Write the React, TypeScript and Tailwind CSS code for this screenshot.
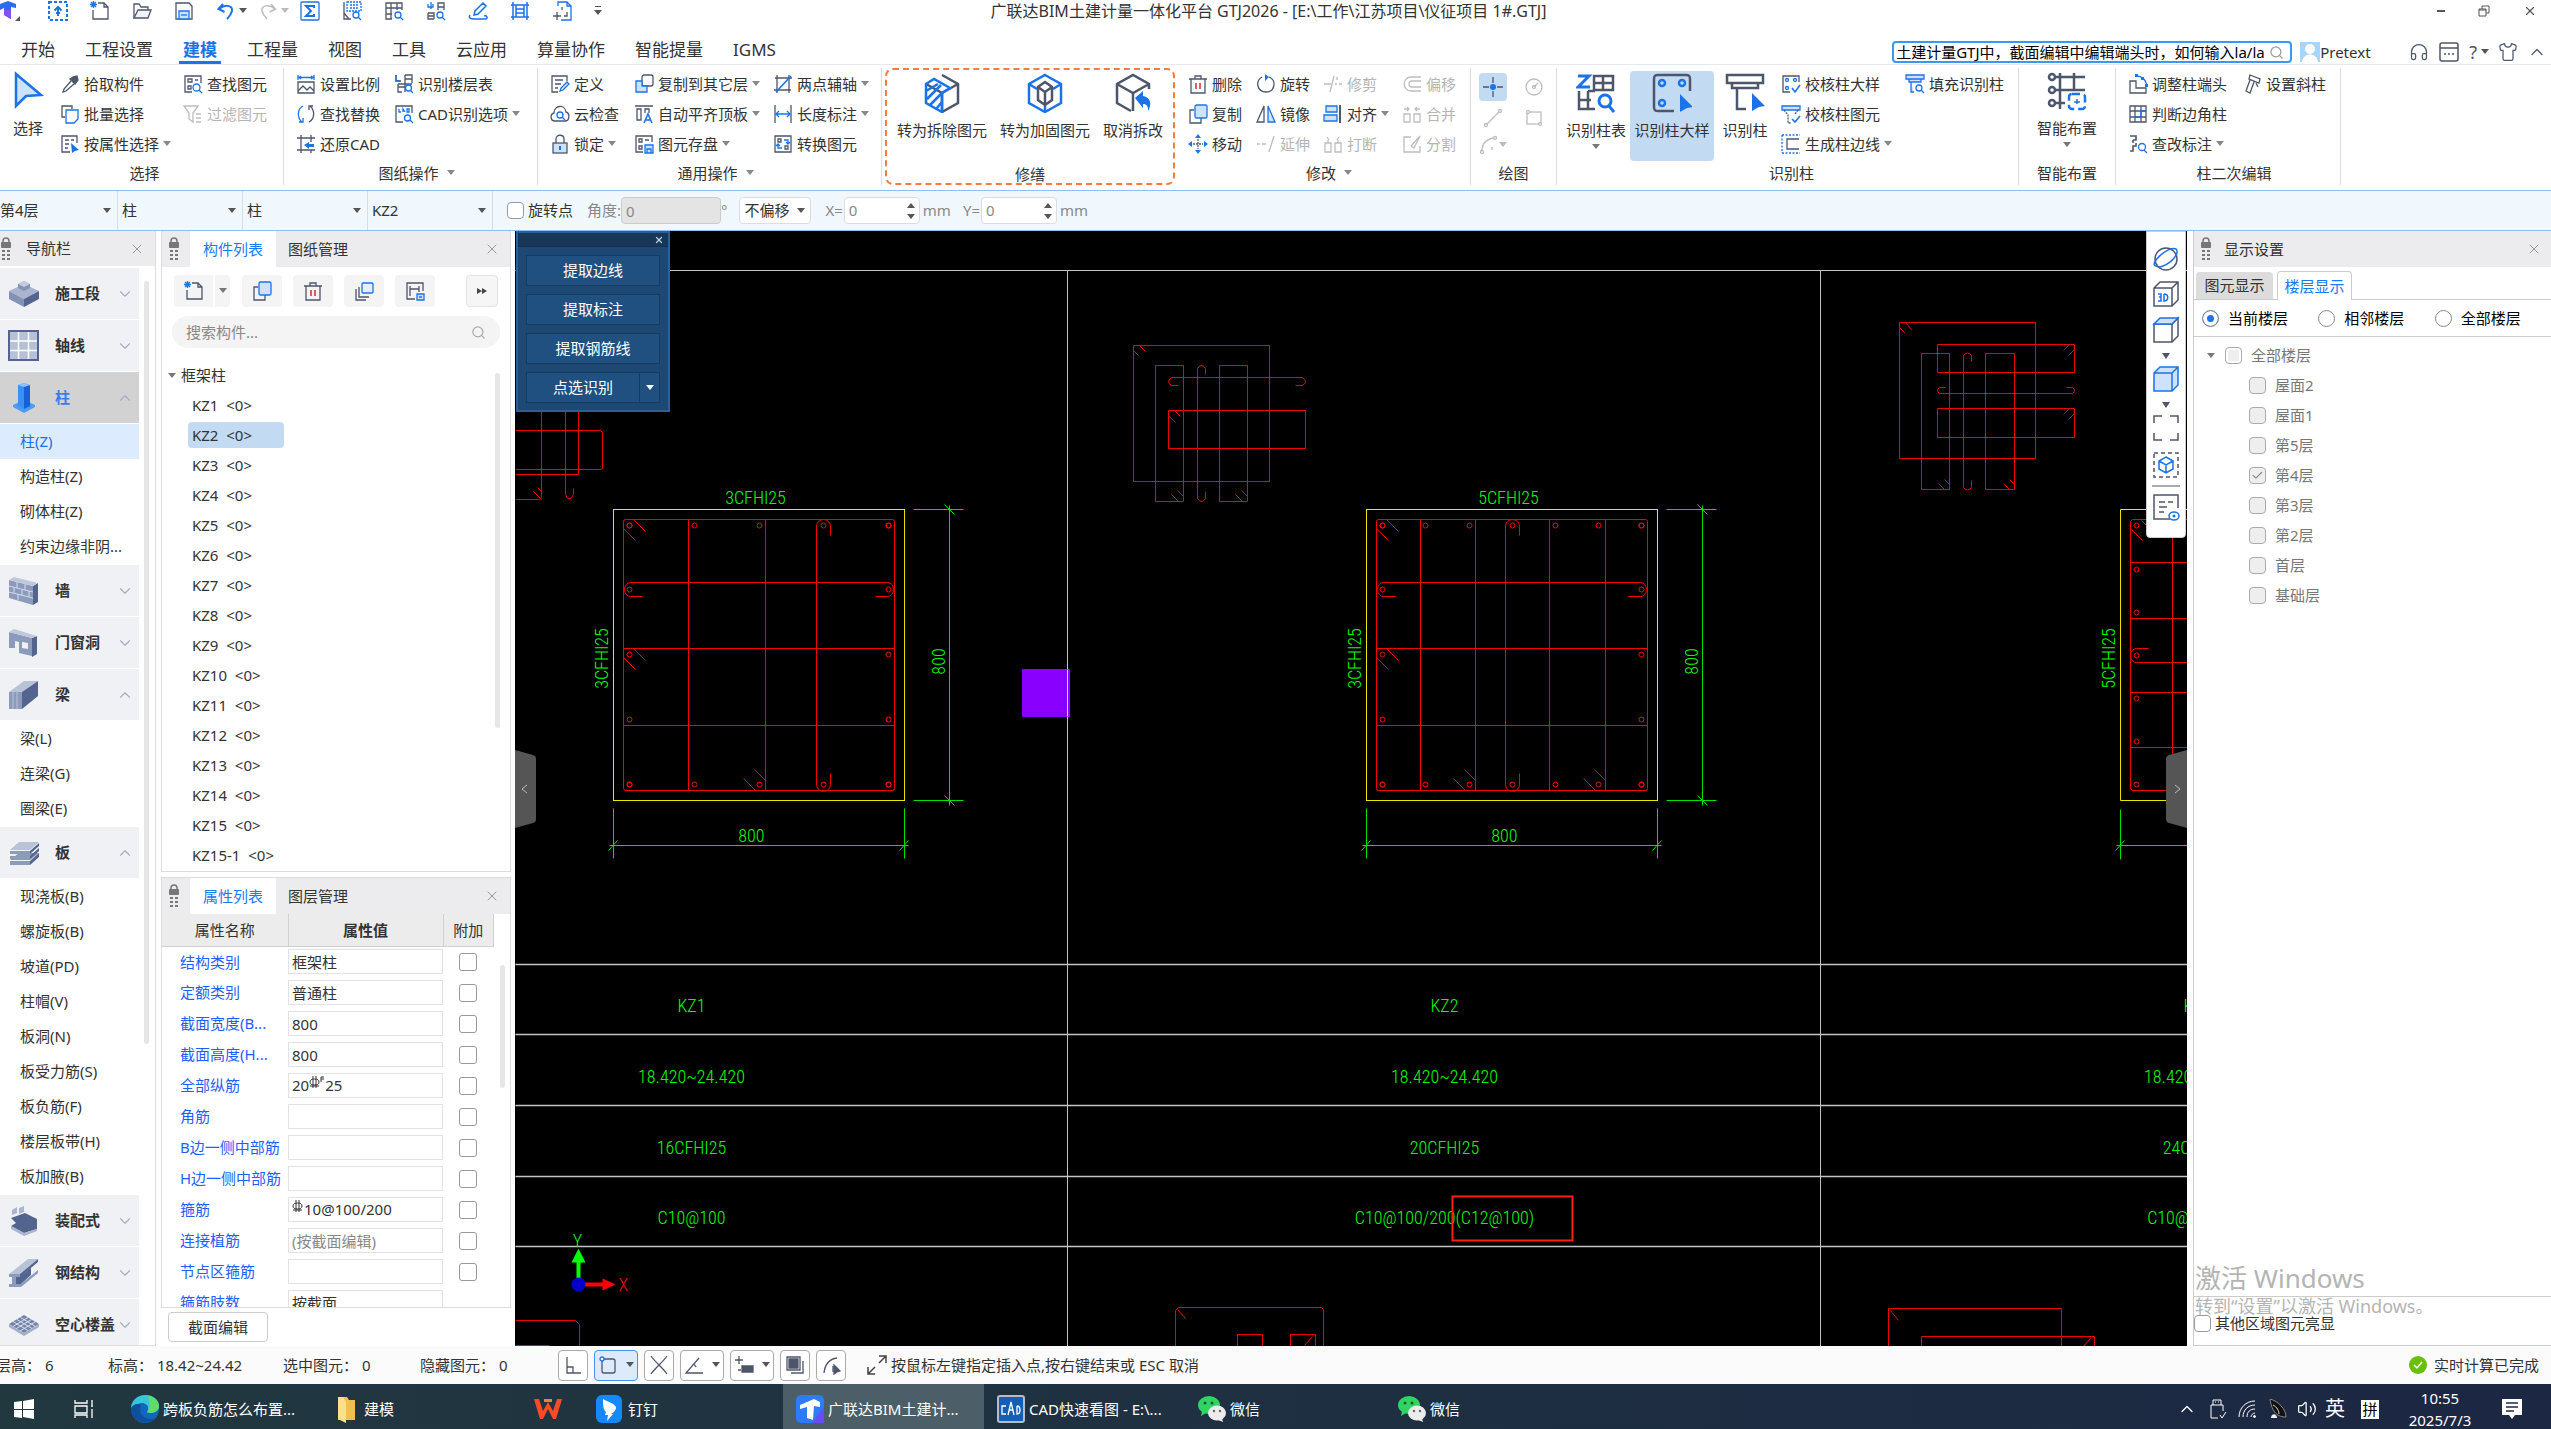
import type { ReactNode } from "react";

import { Check, ChevronDown, ChevronUp, Headphones, Search, Shirt, Volume2, X } from "lucide-react";

const G = "#4d566b";
const B = "#1a73e8";
const L = "#cfe2fb";
const D = "#bdbdbd";

interface GlyphProps {
    name: string;
    className?: string;
}

// 20 x 20 line drawings shared by the toolbars
const glyphs: Record<string, ReactNode> = {
    pickBox: (
        <>
            <rect x="1" y="1" width="18" height="18" stroke={B} strokeWidth="2" strokeDasharray="3 2" />
            <path d="M10 15V6M6.5 9.5 10 6l3.5 3.5M8 12h4" stroke={B} strokeWidth="2" />
        </>
    ),
    newFile: (
        <>
            <path d="M8 2h6l4 4v12H3V9M14 2v4h4" stroke={G} />
            <path d="M1 1l5 5M6 1 1 6M3.5 0v7M0 3.5h7" stroke={B} />
        </>
    ),
    open: (
        <>
            <path d="M2 17V3h5l2 3h7v3" stroke={G} />
            <path d="M2 17 6 9h13l-3 8z" stroke={G} fill="#f1f3f7" />
        </>
    ),
    save: (
        <>
            <path d="M2 18V2h13l3 3v13z" stroke={G} />
            <path d="M5 18v-8h10v8z" stroke={B} fill={L} />
            <path d="M7 14h6" stroke={B} />
        </>
    ),
    undo: <path d="M7 3 2.5 8l6 3M3 8c6-5 14-4 13 2-1 4-3 6-5 8" stroke={B} strokeWidth="2" />,
    redo: <path d="m13 3 4.500 5-6 3M17 8C11 3 3 4 4 10c1 4 3 6 5 8" stroke={D} strokeWidth="1.500" />,
    sigma: (
        <>
            <rect x="1" y="1" width="18" height="18" rx="1" stroke={B} />
            <path d="M14 7V5H6l5 5-5 5h8v-2" stroke={B} strokeWidth="2" />
        </>
    ),
    levelFind: (
        <>
            <path d="M2 1v17h7M2 12l5 6" stroke={G} />
            <path d="M5 1h14v9H5zM8 4h9M8 7h9" stroke={B} strokeDasharray="2 1" />
            <circle cx="14" cy="14" r="3" stroke={B} />
            <path d="m16 16 3 3" stroke={B} />
        </>
    ),
    gridFind: (
        <>
            <path d="M18 9V2H2v16h6M2 7h16M2 13h6M7 2v16M13 2v7" stroke={G} />
            <circle cx="14" cy="14" r="3" stroke={B} />
            <path d="m16 16 3 3" stroke={B} />
        </>
    ),
    blocksFind: (
        <>
            <path d="M12 9V2h6v7M12 6h6M2 12h6v6M2 12v6h6M2 15h6" stroke={G} />
            <path d="M5 1v7M2 3v3h5V3" stroke={B} />
            <circle cx="14" cy="14" r="3" stroke={B} />
            <path d="m16 16 3 3" stroke={B} />
        </>
    ),
    brush: <path d="m15 2 3 3-8 8-4 1 1-4zM2 14c-2 3 1 4 4 4h12c2-1 1-4-2-3" stroke={B} strokeWidth="1.500" />,
    ladder: <path d="M3 1v18M17 1v18M1 4h18M1 16h18M6 4v12M14 4v12M6 8h8M6 12h8" stroke={B} strokeWidth="1.500" />,
    addPage: (
        <>
            <path d="M6 5V1h9l4 4v14H9M15 1v4h4" stroke={B} />
            <path d="M10 6v3M5 11v8M1 15h8M15 11v4h-3" stroke={G} />
        </>
    ),
    cursor: <path d="M3 1v17l5-5 8-1z" stroke={B} strokeWidth="1.600" fill={L} />,
    dropper: (
        <>
            <path d="m13 3 4-1 1 4-3 4-5-5z" fill={G} stroke={G} />
            <path d="m11 7-7 8-1 3 3-1 8-7" stroke={G} />
        </>
    ),
    multi: (
        <>
            <path d="M5 13H2V2h10v3" stroke={G} />
            <path d="M6 6h12v9l-4 4H6z" stroke={B} fill="#fff" />
        </>
    ),
    listCursor: (
        <>
            <path d="M17 9V2H2v16h8" stroke={G} />
            <path d="M5 6h4M11 6h3M5 10h4M5 14h3" stroke={G} />
            <path d="m11 9 8 7-4 1-3 2z" fill={B} />
        </>
    ),
    findList: (
        <>
            <path d="M18 9V2H2v16h7" stroke={G} />
            <path d="M5 5h4v3H5zM5 12h3v3H5zM12 6h3" stroke={G} />
            <circle cx="13.500" cy="13.500" r="3.500" stroke={B} />
            <path d="m16 16 3 3" stroke={B} />
        </>
    ),
    filter: <path d="M1 2h14l-5 7v9l-4-3V9zM13 10h5M13 14h5M13 18h5" stroke={D} />,
    scale: (
        <>
            <path d="M2 1v5M18 1v5M2 3.500h16M5 2 3 3.500 5 5M15 2l2 1.500L15 5" stroke={B} />
            <path d="M2 8h16v11H2zM2 17l5-5 4 4 3-3 4 4" stroke={G} />
        </>
    ),
    floorTable: (
        <>
            <path d="M2 1v6h5M11 1h7v8M11 1v17M11 5h7M4 10v8h4M4 13h7M4 10h14" stroke={G} />
            <circle cx="14.500" cy="14" r="3" stroke={B} />
            <path d="m16.500 16.500 2.500 2.500M2 1v6h4" stroke={B} />
        </>
    ),
    swap: (
        <>
            <path d="M7 2C1 5 1 14 6 18M3 18h4v-4" stroke={B} />
            <path d="M13 18c6-3 6-12 1-16M17 2h-4v4" stroke={G} />
        </>
    ),
    cadFind: (
        <>
            <path d="M18 9V2H2v16h7" stroke={G} />
            <path d="M5 5v3h2M9 8V5l2 3M13 5v3h2V5z" stroke={B} />
            <circle cx="13.500" cy="14" r="3" stroke={B} />
            <path d="m16 16 3 3" stroke={B} />
        </>
    ),
    restore: (
        <>
            <path d="M5 1v18M15 1v7M1 4h18M1 16h18M15 16v3" stroke={G} />
            <path d="m8 11 5-3v2h5v3h-5v2z" fill={B} />
        </>
    ),
    define: (
        <>
            <path d="M17 7V2H2v16h6M5 6h8M5 10h6M5 14h3" stroke={G} />
            <path d="m10 17 1-3 6-6 2 2-6 6z" stroke={B} fill={L} />
        </>
    ),
    cloud: (
        <>
            <path d="M5 17c-5 0-5-7-1-8 0-8 11-9 12-1 4 1 4 9-1 9z" stroke={G} />
            <circle cx="10" cy="11" r="3" stroke={B} />
            <path d="m12 13 3 3" stroke={B} />
        </>
    ),
    lock: (
        <>
            <path d="M6 9V5c0-5 8-5 8 0v4" stroke={G} />
            <rect x="3" y="9" width="14" height="10" stroke={G} fill={L} />
            <path d="M10 12v4" stroke={B} strokeWidth="2" />
        </>
    ),
    copyTo: (
        <>
            <rect x="8" y="1" width="11" height="11" rx="2" stroke={G} />
            <path d="M8 7H2v11h11v-6H8z" stroke={B} fill={L} />
        </>
    ),
    alignTop: (
        <>
            <path d="M1 2h18M3 5h4v11H3zM11 9V5h4v4" stroke={G} />
            <path d="m10 19 4-9 4 9M11.500 16h5" stroke={B} strokeWidth="1.600" />
        </>
    ),
    storeList: (
        <>
            <path d="M18 8V2H2v16h7M5 5h3v3H5zM5 12h3v3H5zM11 6h4" stroke={G} />
            <path d="M11 11h8v8h-8zM13 19v-4h4v4" stroke={B} fill={L} />
        </>
    ),
    axis2: (
        <>
            <path d="M2 4h17M4 1v18M16 1v18M1 16h17" stroke={G} />
            <path d="M3 18 18 2" stroke={B} strokeWidth="1.600" />
        </>
    ),
    lengthDim: (
        <>
            <path d="M2 1v18M18 1v18" stroke={G} />
            <path d="M3 10h14M6 7l-3 3 3 3M14 7l3 3-3 3" stroke={B} />
        </>
    ),
    convert: (
        <>
            <path d="M2 2h16v16H2z" stroke={G} />
            <path d="M5 5h3v3H5zM12 12h3v3h-3z" stroke={G} />
            <path d="M11 6h4v3M9 14H5v-3M13 8l2 2 2-2M3 12l2-2 2 2" stroke={B} />
        </>
    ),
    remove: (
        <>
            <path d="M1 5h18M7 5V2h6v3M3 5v14h14V5" stroke={G} />
            <path d="M8 9v6M12 9v6" stroke="#d9363e" strokeWidth="1.600" />
        </>
    ),
    copy: (
        <>
            <path d="M6 6H2v13h11v-5" stroke={G} />
            <rect x="7" y="1" width="12" height="13" rx="1.500" stroke={B} fill={L} />
        </>
    ),
    move: (
        <>
            <path d="M10 5v10M5 10h10" stroke={G} strokeDasharray="2 1" />
            <path d="m10 0 3 4H7zM10 20l3-4H7zM0 10l4-3v6zM20 10l-4-3v6z" fill={B} />
        </>
    ),
    rotate: (
        <>
            <path d="M13 3c8 3 6 15-3 15S-1 7 6 3" stroke={G} />
            <path d="m9 0 4 3-4 4z" fill={B} />
        </>
    ),
    mirror: (
        <>
            <path d="M8 2v16H1z" stroke={G} />
            <path d="M12 2v16h7z" stroke={B} fill={L} />
        </>
    ),
    extend: <path d="M1 10h3M6 10h4M18 2l-5 16" stroke={D} />,
    trim: <path d="M1 10h7M11 2 7 18M12 10h2M16 10h3M14 3v3" stroke={D} />,
    align: (
        <>
            <path d="M17 1v18" stroke={G} strokeWidth="2" />
            <path d="M3 2h11v6H3zM1 11h13v6H1z" stroke={B} fill={L} />
        </>
    ),
    breakUp: <path d="M2 9h6v9H2zM12 9h6v9h-6zM4 3l2 3M16 3l-2 3M5 9V6M15 9V6" stroke={D} />,
    offset: <path d="M19 3H9C0 3 0 17 9 17h10M19 7h-9c-4 0-4 6 0 6h9" stroke={D} />,
    merge: <path d="M2 10h6v8H2zM12 10h6v8h-6zM2 5h5M5 3l2 2-2 2M18 5h-5M15 3l-2 2 2 2" stroke={D} />,
    split: <path d="M9 3H2v15h16v-6M9 12 18 2M9 12l3 2 6-12" stroke={D} />,
    point: (
        <>
            <path d="M10 0v6M10 14v6M0 10h6M14 10h6" stroke={G} />
            <circle cx="10" cy="10" r="3" fill={B} />
        </>
    ),
    circle: (
        <>
            <circle cx="10" cy="10" r="8" stroke={D} />
            <path d="m10 10 4-4" stroke={D} />
            <circle cx="10" cy="10" r="1.500" stroke={D} />
        </>
    ),
    line: (
        <>
            <path d="M4 16 16 4" stroke={D} />
            <circle cx="3" cy="17" r="1.500" stroke={D} />
            <circle cx="17" cy="3" r="1.500" stroke={D} />
        </>
    ),
    rect: (
        <>
            <rect x="3" y="4" width="14" height="12" stroke={D} />
            <circle cx="4" cy="4" r="1.500" stroke={D} fill="#fff" />
            <circle cx="16" cy="16" r="1.500" stroke={D} fill="#fff" />
        </>
    ),
    arc: (
        <>
            <path d="M3 16C3 8 8 4 15 3M13 12v3" stroke={D} />
            <circle cx="3" cy="17" r="1.500" stroke={D} />
            <circle cx="16" cy="3" r="1.500" stroke={D} />
        </>
    ),
    checkSection: (
        <>
            <path d="M18 8V2H2v16h7" stroke={G} />
            <circle cx="6" cy="6" r="1.500" stroke={B} />
            <circle cx="14" cy="6" r="1.500" stroke={B} />
            <circle cx="6" cy="14" r="1.500" stroke={B} />
            <path d="m11 14 3 4 5-7" stroke={B} strokeWidth="1.600" />
        </>
    ),
    checkElement: (
        <>
            <path d="M1 2h18v4H1z" stroke={B} fill={L} />
            <path d="m3 6 4 5v8h3M17 6l-3 4" stroke={G} strokeDasharray="2 1" />
            <path d="m11 15 3 3 5-6" stroke={B} strokeWidth="1.600" />
        </>
    ),
    edgeLines: (
        <>
            <path d="M1 1h18M1 1v18M1 19h18" stroke={B} strokeDasharray="2 1.500" />
            <path d="M18 5H6v10h12" stroke={G} />
        </>
    ),
    fillFind: (
        <>
            <path d="M1 1h18v4H1zM4 5v3h12V5M6 8v10h3" stroke={B} fill={L} />
            <circle cx="14" cy="14" r="3" stroke={B} fill="#fff" />
            <path d="m16 16 3 3" stroke={B} />
        </>
    ),
    adjustEnd: (
        <>
            <path d="M2 7v12h16v-5H8V7z" stroke={G} />
            <path d="M8 2c6 0 10 4 11 10" stroke={B} />
            <path d="M7 0h3v3H7zM13 3h3v3h-3zM17 10h3v3h-3z" fill={B} />
        </>
    ),
    cornerGrid: (
        <>
            <path d="M2 2h16v16H2zM2 7h16M2 13h16M7 2v16M13 2v16" stroke={G} />
            <path d="M7 13h6V7h5" stroke={B} />
        </>
    ),
    editMark: (
        <>
            <path d="M2 2h6v4H5M5 6v3M8 9v3H5v5H2" stroke={G} strokeWidth="1.600" />
            <circle cx="14" cy="13" r="3.500" stroke={B} />
            <path d="m16 16 3 3" stroke={B} />
        </>
    ),
    slanted: <path d="m8 1 10 4-1 4-10-4zM8 6 4 17l4 2 4-11M14 9l2 4" stroke={G} />,
    batch: (
        <>
            <path d="M2 8v11h10M5 6v10h10" stroke={G} />
            <rect x="8" y="2" width="11" height="10" rx="1" stroke={B} fill="#e4effd" />
        </>
    ),
    storeRow: (
        <>
            <path d="M18 10V2H2v16h8M5 5v10M5 8h9M14 5v6" stroke={G} />
            <path d="M12 13h7v6h-7zM14 16h3" stroke={B} fill={L} />
        </>
    ),
};

function Glyph({ name, className = "size-5" }: GlyphProps) {
    return (
        <svg viewBox="0 0 20 20" fill="none" strokeWidth="1.300" className={`shrink-0 ${className}`}>
            {glyphs[name]}
        </svg>
    );
}

function Caret({ className = "text-[#777]" }: { className?: string }) {
    return (
        <svg viewBox="0 0 8 6" className={`h-[6px] w-2 shrink-0 fill-current ${className}`}>
            <path d="M0 0h8L4 5z" />
        </svg>
    );
}

interface Tool {
    icon: string;
    label: string;
    caret?: boolean;
    disabled?: boolean;
}

function ToolColumn({ tools, className = "" }: { tools: Tool[]; className?: string }) {
    return (
        <div className={`flex shrink-0 flex-col ${className}`}>
            {tools.map((tool) => (
                <button
                    key={tool.label}
                    disabled={tool.disabled}
                    className={`flex h-[30px] items-center gap-1 whitespace-nowrap ${tool.disabled ? "text-[#b5b5b5]" : "text-[#333]"}`}
                >
                    <Glyph name={tool.icon} />
                    {tool.label}
                    {tool.caret && <Caret className="text-[#888]" />}
                </button>
            ))}
        </div>
    );
}

function BigTool({ label, caret, className = "", children }: { label: string; caret?: boolean; className?: string; children: ReactNode }) {
    return (
        <button className={`flex h-[90px] shrink-0 flex-col items-center rounded pt-[2px] whitespace-nowrap ${className}`}>
            <svg viewBox="0 0 40 40" fill="none" stroke={G} strokeWidth="2.500" className="size-10">
                {children}
            </svg>
            <span className="mt-[7px] leading-5">{label}</span>
            {caret && <Caret className="mt-1 text-[#777]" />}
        </button>
    );
}

function RibbonGroup({ label, caret, className = "", children }: { label: string; caret?: boolean; className?: string; children: ReactNode }) {
    return (
        <section className={`flex h-[117px] shrink-0 flex-col ${className}`}>
            <div className="flex h-[91px] pt-px">{children}</div>
            <div className="flex flex-1 items-center justify-center gap-2 pt-[2px]">
                {label}
                {caret && <Caret className="text-[#888]" />}
            </div>
        </section>
    );
}

const quickTools = ["pickBox", "newFile", "open", "save", "undo", "redo", "sigma", "levelFind", "gridFind", "blocksFind", "brush", "ladder", "addPage"];

function TitleBar() {
    return (
        <header className="flex h-[22px] items-center">
            <div className="flex flex-1 items-center">
                <svg viewBox="0 0 20 20" className="mr-7 size-5">
                    <path d="M0 3 8 0l8 3v4l-5-1v12l-7-4V7L0 9z" fill="#2b6cf0" />
                    <path d="M4 9h7v9l-7-4z" fill="#8a4df0" />
                    <path d="M20 15v5h-5z" fill="#555" />
                </svg>
                {quickTools.map((name) => (
                    <button key={name} aria-label={name} className="flex w-[42px] items-center gap-[3px]">
                        <Glyph name={name} />
                        {name === "undo" && <Caret className="text-[#555]" />}
                        {name === "redo" && <Caret className="text-[#bbb]" />}
                    </button>
                ))}
                <svg viewBox="0 0 8 10" className="h-[10px] w-2" fill="#555">
                    <path d="M1 0h6v1H1zM0 4h8L4 9z" />
                </svg>
            </div>
            <h1 className="text-base">广联达BIM土建计量一体化平台 GTJ2026 - [E:\工作\江苏项目\仪征项目 1#.GTJ]</h1>
            <div className="flex flex-1 items-center justify-end gap-[33px] pr-[14px] text-[#555]">
                <button aria-label="最小化" className="h-[2px] w-2 bg-[#555]" />
                <button aria-label="还原">
                    <svg viewBox="0 0 12 12" fill="none" stroke="currentColor" className="size-3">
                        <path d="M4 4V1h7v7H8M1 4h7v7H1zM1 5h7" />
                    </svg>
                </button>
                <button aria-label="关闭">
                    <X className="size-[14px]" />
                </button>
            </div>
        </header>
    );
}

const menus = ["开始", "工程设置", "建模", "工程量", "视图", "工具", "云应用", "算量协作", "智能提量", "IGMS"];

function MenuBar() {
    return (
        <nav className="flex h-[43px] justify-between border-b border-[#e6e8ec]">
            <div className="flex pl-[6px]">
                {menus.map((menu) => (
                    <button
                        key={menu}
                        className={`mx-[11px] border-b-[3px] px-1 pt-[16px] text-[17px] leading-[23px] ${
                            menu === "建模" ? "border-[#1a73e8] font-bold text-[#1a73e8]" : "border-transparent"
                        }`}
                    >
                        {menu}
                    </button>
                ))}
            </div>
            <div className="flex items-center gap-2 pt-[18px] pr-1 text-[15px]">
                <label className="flex h-[22px] w-[400px] items-center rounded-sm border-2 border-[#3b97f5] px-[2px]">
                    <input
                        aria-label="搜索"
                        defaultValue="土建计量GTJ中，截面编辑中编辑端头时，如何输入la/lae"
                        className="min-w-0 flex-1 text-black outline-none"
                    />
                    <Search className="mx-1 size-[15px] text-[#999]" />
                </label>
                <div className="flex w-[101px] items-center">
                    <svg viewBox="0 0 20 20" className="size-5">
                        <path d="M0 0h20v20H0z" fill="#a9d4fb" />
                        <circle cx="10" cy="7" r="5" fill="#fff" />
                        <path d="M2 20c1-10 15-10 16 0z" fill="#fff" />
                    </svg>
                    Pretext
                </div>
                <Headphones className="size-5 text-[#4d566b]" strokeWidth={1.5} />
                <svg viewBox="0 0 20 20" fill="none" stroke={G} strokeWidth="1.500" className="mx-[2px] size-5">
                    <rect x="1" y="1" width="18" height="18" rx="2" />
                    <path d="M1 6h18M5 12h2M9 12h2M13 12h2" />
                </svg>
                <span className="flex items-center gap-1 text-[18px] text-[#4d566b]">
                    ?<Caret className="text-[#555]" />
                </span>
                <Shirt className="mx-px size-5 text-[#4d566b]" strokeWidth={1.5} />
                <ChevronUp className="size-5 text-[#4d566b]" strokeWidth={1.5} />
            </div>
        </nav>
    );
}

function Ribbon() {
    return (
        <div className="flex h-[125px] items-start pt-[3px]">
            <RibbonGroup label="选择" className="w-[284px] border-r border-[#dcdcdc] pl-[6px]">
                <BigTool label="选择" className="w-[54px] pr-[10px]">
                    <path d="M8 3v32l10-10 15-1z" stroke={B} fill={L} />
                </BigTool>
                <ToolColumn
                    className="w-[123px]"
                    tools={[
                        { icon: "dropper", label: "拾取构件" },
                        { icon: "multi", label: "批量选择" },
                        { icon: "listCursor", label: "按属性选择", caret: true },
                    ]}
                />
                <ToolColumn
                    tools={[
                        { icon: "findList", label: "查找图元" },
                        { icon: "filter", label: "过滤图元", disabled: true },
                    ]}
                />
            </RibbonGroup>
            <RibbonGroup label="图纸操作" caret className="w-[254px] border-r border-[#dcdcdc] pl-3">
                <ToolColumn
                    className="w-[98px]"
                    tools={[
                        { icon: "scale", label: "设置比例" },
                        { icon: "swap", label: "查找替换" },
                        { icon: "restore", label: "还原CAD" },
                    ]}
                />
                <ToolColumn
                    tools={[
                        { icon: "floorTable", label: "识别楼层表" },
                        { icon: "cadFind", label: "CAD识别选项", caret: true },
                    ]}
                />
            </RibbonGroup>
            <RibbonGroup label="通用操作" caret className="w-[344px] border-r border-[#dcdcdc] pl-3">
                <ToolColumn
                    className="w-[84px]"
                    tools={[
                        { icon: "define", label: "定义" },
                        { icon: "cloud", label: "云检查" },
                        { icon: "lock", label: "锁定", caret: true },
                    ]}
                />
                <ToolColumn
                    className="w-[139px]"
                    tools={[
                        { icon: "copyTo", label: "复制到其它层", caret: true },
                        { icon: "alignTop", label: "自动平齐顶板", caret: true },
                        { icon: "storeList", label: "图元存盘", caret: true },
                    ]}
                />
                <ToolColumn
                    tools={[
                        { icon: "axis2", label: "两点辅轴", caret: true },
                        { icon: "lengthDim", label: "长度标注", caret: true },
                        { icon: "convert", label: "转换图元" },
                    ]}
                />
            </RibbonGroup>
            <RibbonGroup label="修缮" className="mx-[3px] w-[290px] rounded-lg border-2 border-dashed border-[#ff7a3d]">
                <div className="flex flex-1 justify-center gap-[13px]">
                    <BigTool label="转为拆除图元">
                        <path d="m20 2 16 9v19l-16 9V20L4 11" />
                        <path d="m36 11-16 9" />
                        <path d="M20 39 4 30V11l8-5 16 9-8 5zM4 18l12-7M5 26l14-14M8 32l12-12M14 36l6-7" stroke={B} />
                    </BigTool>
                    <BigTool label="转为加固图元">
                        <path d="m20 2 16 9v19l-16 9-16-9V11zM4 11l8 5M36 11l-8 5M20 39v-6" stroke={B} />
                        <path d="m20 9 7 5v13l-7 5-7-5V14zM13 14l7 5 7-5M20 19v12" />
                    </BigTool>
                    <BigTool label="取消拆改">
                        <path d="M18 38 4 30V11l16-9 16 9v5M4 11l16 9 16-9M20 20v18" />
                        <path d="m22 25 8-7v5c8 1 9 9 5 15 0-5-1-7-5-7v4z" fill={B} stroke="none" />
                    </BigTool>
                </div>
            </RibbonGroup>
            <RibbonGroup label="修改" caret className="w-[293px] border-r border-[#dcdcdc] pl-[10px]">
                <ToolColumn
                    className="w-[68px]"
                    tools={[
                        { icon: "remove", label: "删除" },
                        { icon: "copy", label: "复制" },
                        { icon: "move", label: "移动" },
                    ]}
                />
                <ToolColumn
                    className="w-[67px]"
                    tools={[
                        { icon: "rotate", label: "旋转" },
                        { icon: "mirror", label: "镜像" },
                        { icon: "extend", label: "延伸", disabled: true },
                    ]}
                />
                <ToolColumn
                    className="w-[79px]"
                    tools={[
                        { icon: "trim", label: "修剪", disabled: true },
                        { icon: "align", label: "对齐", caret: true },
                        { icon: "breakUp", label: "打断", disabled: true },
                    ]}
                />
                <ToolColumn
                    tools={[
                        { icon: "offset", label: "偏移", disabled: true },
                        { icon: "merge", label: "合并", disabled: true },
                        { icon: "split", label: "分割", disabled: true },
                    ]}
                />
            </RibbonGroup>
            <RibbonGroup label="绘图" className="w-[86px] border-r border-[#dcdcdc]">
                <div className="grid flex-1 grid-cols-2 place-items-center px-[2px]">
                    <button aria-label="点" className="rounded bg-[#c3daf3] p-1">
                        <Glyph name="point" />
                    </button>
                    {["circle", "line", "rect"].map((name) => (
                        <button key={name} aria-label={name}>
                            <Glyph name={name} />
                        </button>
                    ))}
                    <button aria-label="弧" className="flex items-center">
                        <Glyph name="arc" />
                        <Caret className="text-[#bbb]" />
                    </button>
                </div>
            </RibbonGroup>
            <RibbonGroup label="识别柱" className="w-[462px] border-r border-[#dcdcdc] pl-2">
                <div className="mr-2 flex gap-[3px] pt-[2px]">
                    <BigTool label="识别柱表" caret className="w-[62px]">
                        <path d="M2 3h11L2 14h12" stroke={B} strokeWidth="3" />
                        <path d="M18 17V3h19v14zM18 10h19M27 3v14M3 18v18h16M3 27h12M12 18v18M12 18h7" />
                        <circle cx="29" cy="28" r="6" stroke={B} strokeWidth="3" />
                        <path d="m33 33 5 6" stroke={B} strokeWidth="3" />
                    </BigTool>
                    <BigTool label="识别柱大样" className="h-[88px] w-[84px] bg-[#c3daf3]">
                        <path d="M38 18V6c0-3-1-4-4-4H6C3 2 2 3 2 6v28c0 3 1 4 4 4h16" />
                        <circle cx="10" cy="10" r="3" stroke={B} />
                        <circle cx="30" cy="10" r="3" stroke={B} />
                        <circle cx="10" cy="30" r="3" stroke={B} />
                        <path d="m28 21 13 13-6 1-7 4z" fill={B} stroke="none" />
                    </BigTool>
                    <BigTool label="识别柱" className="w-[56px]">
                        <path d="M2 2h36v8H2zM7 10v5h26v-5M12 15v21h9" />
                        <path d="m27 20 13 13-6 1-7 4z" fill={B} stroke="none" />
                    </BigTool>
                </div>
                <ToolColumn
                    className="w-[124px]"
                    tools={[
                        { icon: "checkSection", label: "校核柱大样" },
                        { icon: "checkElement", label: "校核柱图元" },
                        { icon: "edgeLines", label: "生成柱边线", caret: true },
                    ]}
                />
                <ToolColumn tools={[{ icon: "fillFind", label: "填充识别柱" }]} />
            </RibbonGroup>
            <RibbonGroup label="智能布置" className="w-[97px] border-r border-[#dcdcdc]">
                <BigTool label="智能布置" caret className="w-full">
                    <path d="M6 6h32M6 19h32M6 32h12M13 2v36M27 2v17" />
                    <g fill="#fff">
                        <circle cx="5" cy="6" r="3" />
                        <circle cx="5" cy="19" r="3" />
                        <circle cx="5" cy="32" r="3" />
                    </g>
                    <rect x="22" y="23" width="16" height="15" rx="3" stroke={B} strokeDasharray="8 4" />
                    <path d="M30 28v5M27 31h6" stroke={B} strokeWidth="1.500" />
                </BigTool>
            </RibbonGroup>
            <RibbonGroup label="柱二次编辑" className="w-[225px] border-r border-[#dcdcdc] pl-3">
                <ToolColumn
                    className="w-[114px]"
                    tools={[
                        { icon: "adjustEnd", label: "调整柱端头" },
                        { icon: "cornerGrid", label: "判断边角柱" },
                        { icon: "editMark", label: "查改标注", caret: true },
                    ]}
                />
                <ToolColumn tools={[{ icon: "slanted", label: "设置斜柱" }]} />
            </RibbonGroup>
        </div>
    );
}

function BarSelect({ label, value, className }: { label: string; value: string; className: string }) {
    return (
        <label className={`flex h-full items-center border-r border-[#d9dde2] pr-[6px] ${className}`}>
            <select aria-label={label} className="min-w-0 flex-1 appearance-none outline-none">
                <option>{value}</option>
            </select>
            <Caret className="text-[#555]" />
        </label>
    );
}

function NumberBox({ label }: { label: string }) {
    return (
        <label className="flex items-center text-[#888]">
            {label}
            <span className="mr-[3px] ml-px flex h-[27px] w-[76px] items-center rounded-sm border border-[#ddd] bg-white px-1">
                <input defaultValue="0" className="min-w-0 flex-1 outline-none" />
                <span className="flex flex-col gap-[6px]">
                    <Caret className="rotate-180 text-[#555]" />
                    <Caret className="text-[#555]" />
                </span>
            </span>
            mm
        </label>
    );
}

function OptionBar() {
    return (
        <div className="flex h-[41px] shrink-0 items-center border-y border-[#8fbff2] bg-[#f1f8fd]">
            <BarSelect label="楼层" value="第4层" className="w-[118px]" />
            <BarSelect label="构件类型" value="柱" className="w-[125px] pl-1" />
            <BarSelect label="构件" value="柱" className="w-[125px] pl-1" />
            <BarSelect label="名称" value="KZ2" className="w-[125px] pl-1" />
            <label className="ml-[14px] flex items-center gap-1">
                <input type="checkbox" className="size-[17px] appearance-none rounded-sm border border-[#999] bg-white" />
                旋转点
            </label>
            <label className="ml-[14px] flex items-center text-[#888]">
                角度:
                <input
                    disabled
                    defaultValue="0"
                    className="h-[27px] w-[100px] rounded-sm border border-[#ccc] bg-[#e4e4e4] px-1"
                />
                °
            </label>
            <label className="mr-[14px] ml-3 flex h-[27px] w-[72px] items-center rounded-sm border border-[#ddd] bg-white pr-[5px] pl-1">
                <select aria-label="偏移方式" className="min-w-0 flex-1 appearance-none outline-none">
                    <option>不偏移</option>
                </select>
                <Caret className="text-[#555]" />
            </label>
            <NumberBox label="X=" />
            <span className="w-3" />
            <NumberBox label="Y=" />
        </div>
    );
}

function LockGrip() {
    return (
        <svg viewBox="0 0 12 24" className="h-6 w-3 shrink-0" fill="#777">
            <path d="M3 6V4c0-4 6-4 6 0v2" fill="none" stroke="#777" strokeWidth="1.500" />
            <rect x="1" y="5" width="10" height="6" rx="1" />
            <path d="M2 13h3v2H2zM7 13h3v2H7zM2 17h3v2H2zM7 17h3v2H7zM2 21h3v2H2zM7 21h3v2H7z" />
        </svg>
    );
}

const navShapes: Record<string, ReactNode> = {
    施工段: (
        <>
            <path d="m0 12 15-7 15 7-15 8z" fill="#a9b5ce" />
            <path d="m0 12 15 8v8L0 20z" fill="#8493b5" />
            <path d="m30 12-15 8v8l15-8z" fill="#53658f" />
            <path d="m9 5 6-3 6 3v4l-6 3-6-3z" fill="#8493b5" />
            <path d="m9 5 6-3 6 3-6 3z" fill="#c3ccde" />
        </>
    ),
    轴线: (
        <>
            <path d="M0 0h29v29H0z" fill="#b6c0d6" stroke="#53658f" strokeWidth="2" />
            <path d="M9.500 1v27M19.500 1v27M1 10h27M1 19.500h27" stroke="#fff" strokeWidth="1.500" />
        </>
    ),
    柱: (
        <>
            <path d="m4 22 11-5 11 5v2l-11 6-11-6z" fill="#4d9bf5" />
            <path d="m9 2 6-2 6 2v21l-6 3-6-3z" fill="#3b90f5" />
            <path d="m21 2-6 2v22l6-3z" fill="#1462d6" />
            <path d="m9 2 6-2 6 2-6 2z" fill="#8cc1fb" />
        </>
    ),
    墙: (
        <>
            <path d="m0 4 24 6v19L0 22z" fill="#8c9abb" />
            <path d="m24 10 5-3v19l-5 3z" fill="#53658f" />
            <path d="m0 4 5-3 24 6-5 3z" fill="#c0c9dc" />
            <path d="m0 10 24 6M0 16l24 6M8 6v6M16 8v6M5 12v5M13 14v6M20 15v6M9 18v6" stroke="#d5dbe8" fill="none" />
        </>
    ),
    门窗洞: (
        <>
            <path d="m0 4 23 6v18l-13-3V14l-4-1v7H0z" fill="#8c9abb" />
            <path d="m23 10 5-2v18l-5 3z" fill="#53658f" />
            <path d="m0 4 5-3 23 7-5 2z" fill="#c0c9dc" />
            <path d="m13 14 6 1v6l-6-1z" fill="#f0f1f5" />
        </>
    ),
    梁: (
        <>
            <path d="m0 12 15-11h14L13 12z" fill="#b9c3d8" />
            <path d="M0 12h13v17H0z" fill="#8c9abb" />
            <path d="M13 12 29 1v15L13 29z" fill="#53658f" />
            <path d="M4 12v17M8 12v17" stroke="#b9c3d8" />
        </>
    ),
    板: (
        <>
            <path d="m1 22 9-7h20l-9 7z" fill="#8c9abb" />
            <path d="M1 12 10 4h20l-9 8z" fill="#b9c3d8" />
            <path d="M1 13h20v3H1zM1 18h20v3H1zM1 23h20v4H1z" fill="#8c9abb" />
            <path d="m21 13 9-8v3l-9 8zM21 18l9-8v3l-9 8zM21 23l9-8v4l-9 8z" fill="#53658f" />
        </>
    ),
    装配式: (
        <>
            <path d="m3 4 5-3v6l-5 2zM10 2l5-2v6l-5 2z" fill="#aab6cf" />
            <path d="m2 12 14-5 12 6v10l-13 4L2 20l5-3z" fill="#53658f" />
            <path d="m2 20 13 7 13-4v2l-13 5-13-7z" fill="#aab6cf" />
        </>
    ),
    钢结构: (
        <>
            <path d="M0 16 19 1h10L11 16z" fill="#b9c3d8" />
            <path d="M0 16h11v3H7v7h5v3H0v-3h3v-7H0z" fill="#8c9abb" />
            <path d="M11 16 29 1v3L11 19zM7 19h4l11-9v7l-10 9H7z" fill="#53658f" />
            <path d="m12 26 17-14v3L12 29z" fill="#8c9abb" />
        </>
    ),
    空心楼盖: (
        <>
            <path d="m0 14 15-9 15 9-15 9z" fill="#7384aa" />
            <path d="m0 14 15 9 15-9v3l-15 9-15-9z" fill="#a3afca" />
            <path d="m4 11.500 15 9M8 9.500l15 9M11.500 7.500l15 9M4 16.500l15-9M7.500 18.500l15-9M11 21l15-9" stroke="#dce1ec" />
        </>
    ),
};

interface NavGroup {
    name: string;
    active?: boolean;
    items?: string[];
}

const navGroups: NavGroup[] = [
    { name: "施工段" },
    { name: "轴线" },
    { name: "柱", active: true, items: ["柱(Z)", "构造柱(Z)", "砌体柱(Z)", "约束边缘非阴..."] },
    { name: "墙" },
    { name: "门窗洞" },
    { name: "梁", items: ["梁(L)", "连梁(G)", "圈梁(E)"] },
    {
        name: "板",
        items: ["现浇板(B)", "螺旋板(B)", "坡道(PD)", "柱帽(V)", "板洞(N)", "板受力筋(S)", "板负筋(F)", "楼层板带(H)", "板加腋(B)"],
    },
    { name: "装配式" },
    { name: "钢结构" },
    { name: "空心楼盖" },
];

function NavPanel() {
    return (
        <aside className="flex w-[156px] shrink-0 flex-col border-r border-b border-[#ddd]">
            <div className="flex h-[35px] shrink-0 items-center bg-[#ececee]">
                <LockGrip />
                <h2 className="ml-[14px] flex-1">导航栏</h2>
                <X className="mr-[10px] size-4 text-[#999]" strokeWidth={1.5} />
            </div>
            <div className="mt-[2px] flex min-h-0 flex-1 overflow-hidden">
                <div className="w-[139px]">
                    {navGroups.map((group) => (
                        <div key={group.name}>
                            <button
                                className={`flex h-[52px] w-full items-center border-b border-white pr-[5px] pl-2 ${
                                    group.active ? "bg-[#d2d2d2] font-bold text-[#3a7de8]" : "bg-[#eff1f5] font-bold"
                                }`}
                            >
                                <svg viewBox="-1 -1 32 32" className="mr-[15px] size-8 shrink-0">
                                    {navShapes[group.name]}
                                </svg>
                                <span className="flex-1 text-left whitespace-nowrap">{group.name}</span>
                                {group.items ? (
                                    <ChevronUp className="size-[18px] text-[#a3adc4]" strokeWidth={1.5} />
                                ) : (
                                    <ChevronDown className="size-[18px] text-[#a3adc4]" strokeWidth={1.5} />
                                )}
                            </button>
                            {group.items && (
                                <ul className="pb-px">
                                    {group.items.map((item) => (
                                        <li
                                            key={item}
                                            className={`flex h-[35px] items-center pl-5 whitespace-nowrap ${
                                                item === "柱(Z)" ? "bg-[#dcecfe] text-[#1a73e8]" : ""
                                            }`}
                                        >
                                            {item}
                                        </li>
                                    ))}
                                </ul>
                            )}
                        </div>
                    ))}
                </div>
                <div className="mt-[13px] ml-[5px] h-[763px] w-[5px] rounded-full bg-[#e6e6e6]" />
            </div>
        </aside>
    );
}

function PanelTabs({ active, other }: { active: string; other: string }) {
    return (
        <div className="flex h-[36px] shrink-0 items-center bg-[#ececee] pl-[6px]">
            <LockGrip />
            <button className="ml-[10px] h-full w-[86px] bg-white text-[#1a7af0]">{active}</button>
            <button className="ml-[12px] flex-1 text-left">{other}</button>
            <X className="mr-[10px] size-4 text-[#999]" strokeWidth={1.5} />
        </div>
    );
}

const members = ["KZ1", "KZ2", "KZ3", "KZ4", "KZ5", "KZ6", "KZ7", "KZ8", "KZ9", "KZ10", "KZ11", "KZ12", "KZ13", "KZ14", "KZ15", "KZ15-1"];

function MemberPanel() {
    return (
        <section className="flex h-[641px] shrink-0 flex-col overflow-hidden border border-t-0 border-[#ddd]">
            <PanelTabs active="构件列表" other="图纸管理" />
            <div className="flex px-3 pt-2 pb-[9px]">
                <button aria-label="新建" className="grid h-8 w-[39px] place-items-center rounded-l bg-[#f4f4f5]">
                    <Glyph name="newFile" />
                </button>
                <button aria-label="新建选项" className="mr-3 ml-[2px] grid h-8 w-[15px] place-items-center rounded-r bg-[#f4f4f5]">
                    <Caret />
                </button>
                {["copy", "remove", "batch", "storeRow"].map((name) => (
                    <button key={name} aria-label={name} className="mr-[11px] grid h-8 w-10 place-items-center rounded bg-[#f4f4f5]">
                        <Glyph name={name} />
                    </button>
                ))}
                <button aria-label="更多" className="ml-auto grid h-8 w-8 place-items-center rounded border border-[#e2e2e2] bg-[#f6f6f6]">
                    <svg viewBox="0 0 10 6" className="h-[6px] w-[10px]" fill="#444">
                        <path d="m0 0 5 3-5 3zM5 0l5 3-5 3z" />
                    </svg>
                </button>
            </div>
            <label className="mx-[10px] flex h-8 shrink-0 items-center rounded-full bg-[#f4f4f4] px-[14px]">
                <input placeholder="搜索构件..." className="min-w-0 flex-1 outline-none placeholder:text-[#888]" />
                <Search className="size-[15px] text-[#aaa]" />
            </label>
            <div className="flex justify-between pt-[13px]">
                <div className="pl-[6px]">
                    <button className="flex h-[29px] items-center gap-[5px]">
                        <Caret />
                        框架柱
                    </button>
                    <ul className="pl-5">
                        {members.map((name) => (
                            <li key={name} className="h-[30px] py-[2px]">
                                <button
                                    className={`h-[26px] w-24 rounded-sm pl-1 text-left whitespace-pre ${name === "KZ2" ? "bg-[#c3daf3]" : ""}`}
                                >
                                    {name + "  <0>"}
                                </button>
                            </li>
                        ))}
                    </ul>
                </div>
                <div className="mt-[12px] mr-[10px] h-[355px] w-[5px] rounded-full bg-[#e6e6e6]" />
            </div>
        </section>
    );
}

// Threaded bar sign, with a raised F for the seismic grade
function Rebar({ mark }: { mark?: boolean }) {
    return (
        <svg
            viewBox={mark ? "0 0 16 14" : "0 0 12 14"}
            className={`-mt-2 inline h-[14px] ${mark ? "w-4" : "w-3"}`}
            fill="none"
            stroke="#333"
        >
            <ellipse cx="5.500" cy="6" rx="4.500" ry="3" />
            <path d="M4 0v12M7 0v12M1 10h9" />
            {mark && <path d="M12 6V1h3M12 3h3" />}
        </svg>
    );
}

interface Property {
    name: string;
    value?: string;
    muted?: boolean;
    rebar?: ReactNode;
}

const properties: Property[] = [
    { name: "结构类别", value: "框架柱" },
    { name: "定额类别", value: "普通柱" },
    { name: "截面宽度(B...", value: "800" },
    { name: "截面高度(H...", value: "800" },
    { name: "全部纵筋", rebar: <>20<Rebar mark />25</> },
    { name: "角筋" },
    { name: "B边一侧中部筋" },
    { name: "H边一侧中部筋" },
    { name: "箍筋", rebar: <><Rebar />10@100/200</> },
    { name: "连接植筋", value: "(按截面编辑)", muted: true },
    { name: "节点区箍筋" },
    { name: "箍筋肢数", value: "按截面" },
];

function PropertyPanel() {
    return (
        <section className="mt-[5px] flex min-h-0 flex-1 flex-col">
            <div className="flex min-h-0 flex-1 flex-col overflow-hidden border border-[#ddd]">
                <PanelTabs active="属性列表" other="图层管理" />
                <div className="flex min-h-0 flex-1 justify-between overflow-hidden">
                    <div>
                        <table className="w-[332px] table-fixed border-collapse">
                            <thead>
                                <tr className="h-[32px] border-b border-[#d0d0d0] bg-[#ececec]">
                                    <th className="w-[126px] border-r border-[#d0d0d0] font-normal">属性名称</th>
                                    <th className="w-[155px] border-r border-[#d0d0d0] font-bold">属性值</th>
                                    <th className="border-r border-[#d0d0d0] font-normal">附加</th>
                                </tr>
                            </thead>
                            <tbody>
                                {properties.map((property) => (
                                    <tr key={property.name} className="h-[31px]">
                                        <th className="pl-[18px] text-left font-normal whitespace-nowrap text-[#1f5eff]">{property.name}</th>
                                        <td>
                                            {property.rebar ? (
                                                <div className="h-[25px] border border-[#e2e2e2] px-[3px] leading-[22px]">{property.rebar}</div>
                                            ) : (
                                                <input
                                                    aria-label={property.name}
                                                    defaultValue={property.value}
                                                    className={`block h-[25px] w-full border border-[#e2e2e2] px-[3px] ${property.muted ? "text-[#888]" : ""}`}
                                                />
                                            )}
                                        </td>
                                        <td className="pl-4">
                                            {property.name !== "箍筋肢数" && (
                                                <input
                                                    type="checkbox"
                                                    aria-label={`附加${property.name}`}
                                                    className="block size-[18px] appearance-none rounded-[3px] border border-[#999]"
                                                />
                                            )}
                                        </td>
                                    </tr>
                                ))}
                            </tbody>
                        </table>
                    </div>
                    <div className="mt-[51px] mr-[5px] h-[123px] w-[5px] rounded-full bg-[#e6e6e6]" />
                </div>
            </div>
            <div className="h-[38px] shrink-0 px-[7px] pt-[4px]">
                <button className="h-[30px] w-[100px] rounded border border-[#ccc]">截面编辑</button>
            </div>
        </section>
    );
}

// Bent reinforcement ends: two parallel strokes leaving a corner
function Bend({ x, y, size = 11 }: { x: number; y: number; size?: number }) {
    return <path d={`M${x + 10} ${y}l${size} ${size}M${x} ${y + 9}l${size} ${size}`} />;
}

interface SectionProps {
    x: number;
    bars: number[];
    links: number[];
    hook: number;
    bends: number[];
    top: string;
}

function ColumnSection({ x, bars, links, hook, bends, top }: SectionProps) {
    const rows = [16, 80, 145, 210, 275];

    return (
        <g transform={`translate(${x} 509)`}>
            <rect width="291" height="291" stroke="#e8e800" />
            <g stroke="#f80000">
                <rect x="10" y="10" width="271" height="271" rx="2" />
                <path d="M10 139h271M10 216h271" />
                <path d="M29 87H17a6 7 0 0 1 0-14h257a6 7 0 0 1 0 14h-12" />
                {links.map((link) => (
                    <path key={link} d={`M${link} 10v271`} />
                ))}
                <path d={`M${hook + 7} 26v-9a7 7 0 0 0-14 0v258a7 7 0 0 0 14 0v-11`} />
                <Bend x={10} y={10} size={12} />
                <Bend x={10} y={139} size={12} />
                {bends.map((bend) => (
                    <path key={bend} d={`M${bend} 271l-11-11M${bend - 10} 281l-12-12`} />
                ))}
                {bars.map((bar) => (
                    <g key={bar}>
                        <circle cx={bar} cy="16" r="2.500" />
                        <circle cx={bar} cy="275" r="2.500" />
                    </g>
                ))}
                {rows.map((row) => (
                    <g key={row}>
                        <circle cx="16" cy={row} r="2.500" />
                        <circle cx="275" cy={row} r="2.500" />
                    </g>
                ))}
            </g>
            <g stroke="#00e000">
                <path d="M300 0h50M300 291h50M336-4v300M331-5l10 10M331 286l10 10" />
                <path d="M0 299v50M291 299v50M-4 336h299M-5 341l9-10M286 341l9-10" />
            </g>
            <g fill="#00ff00" stroke="none" textAnchor="middle">
                <text x="142" y="-6">{top}</text>
                <text x="138" y="332">800</text>
                <text transform="translate(-6 149) rotate(-90)">3CFHI25</text>
                <text transform="translate(331 152) rotate(-90)">800</text>
            </g>
        </g>
    );
}

const tableRows = [
    { y: 1011, texts: ["KZ1", "KZ2", "KZ3"] },
    { y: 1082, texts: ["18.420~24.420", "18.420~24.420", "18.420~24.420"] },
    { y: 1153, texts: ["16CFHI25", "20CFHI25", "24CFHI25"] },
    { y: 1223, texts: ["C10@100", "C10@100/200(C12@100)", "C10@100/200"] },
];

function Drawing() {
    return (
        <svg className="block size-full font-[Roboto_Condensed] text-[18px] font-light" fill="none">
            {/* drawing coordinates start at 515, 231 */}
            <g transform="translate(-514.500 -230.500)">
                <g stroke="#c4c4c4">
                    <path d="M515 270h1700M1067 270v1100M1820 270v1100" />
                    <path strokeWidth="1.500" d="M515 964h1700M515 1034h1700M515 1105h1700M515 1176h1700M515 1246h1700" />
                </g>

                <path d="M1022 669h47v47h-47z" fill="#8a00ff" stroke="#8a00ff" />
                <path d="M1067 669v47" stroke="#ddd" />

                <ColumnSection x={613} bars={[16, 81, 146, 210, 275]} links={[75, 152]} hook={210} bends={[152]} top="3CFHI25" />
                <ColumnSection
                    x={1366}
                    bars={[16, 59, 103, 146, 189, 232, 275]}
                    links={[54, 109, 183, 239]}
                    hook={146}
                    bends={[109, 239]}
                    top="5CFHI25"
                />

                {/* section cut off by the right edge */}
                <path d="M2200 509h-80v291h80" stroke="#e8e800" />
                <g stroke="#f80000">
                    <path d="M2200 519h-68l-2 2v267l2 2h68M2172 519v271M2130 562h70M2130 618h70M2130 692h70M2130 747h70" />
                    <path d="M2148 648h-12a6 7 0 0 0 0 14h64" />
                    <Bend x={2131} y={520} />
                    {[525, 569, 612, 655, 698, 741, 784].map((y) => (
                        <circle key={y} cx="2136" cy={y} r="2.500" />
                    ))}
                </g>
                <path d="M2120 809v50M2116 845h84M2115 850l9-10" stroke="#00e000" />

                {/* stirrup details */}
                <g stroke="#f00000">
                    <path d="M541 400v96q0 3-3 3h-23M565 400v94q3 9 8 0v-6M578 400v74h-63M515 430h85l2 2v36l-2 1h-85M541 499l-8-8M541 491l-4-4" />
                    <path d="M1133 345h136v136h-136zM1155 365h28v136h-28zM1219 365h28v136h-28zM1168 410h137v38h-137z" />
                    <path d="M1205 374v-6q-4-6-8 0v130q4 6 8 0v-7M1178 385h-7q-6-4 0-8h131q6 4 0 8h-7" />
                    <path d="M1139 345l6 6M1133 350l5 5M1174 410l6 6M1168 415l7 7M1183 496l-6-6M1178 501l-7-7M1247 496l-6-6M1242 501l-7-7" />
                    <path d="M1899 322h136v136h-136zM1921 353h28v136h-28zM1985 353h29v136h-29zM1937 344h137v28h-137zM1937 408h137v29h-137z" />
                    <path d="M1971 361v-6q-4-5-8 0v132q4 5 8 0v-7M1945 387h-6q-4 3 0 6h133q4-3 0-6h-6" />
                    <path d="M1905 322l6 7M1899 327l5 5M2069 344l-6 6M2074 349l-6 6M2069 408l-6 6M2074 413l-6 6M1949 484l-5-5M1944 489l-6-6M2014 484l-5-5M2009 489l-6-6" />
                    <path d="M515 1320h60l4 4v30M515 1345h34" />
                    <path d="M1175 1360v-50l3-3h143l2 2v50M1237 1360v-26h25v26M1290 1360v-26h25v26M1177 1309l8 9M1312 1336l-8 9" />
                    <path d="M1888 1360v-52h173v52M1921 1360v-24h173v24M1890 1310l8 10M2090 1338l-8 9" />
                </g>

                <g fill="#00ff00" textAnchor="middle">
                    {tableRows.map((row) =>
                        row.texts.map((text, column) => (
                            <text key={text + column} x={691 + column * 753} y={row.y}>
                                {text}
                            </text>
                        )),
                    )}
                    <text transform="translate(2114 658) rotate(-90)">5CFHI25</text>
                    <text x="577" y="1246">Y</text>
                </g>
                <path d="M1452 1196h120v44h-120z" stroke="#ff2010" strokeWidth="2" />

                <path d="M578 1283v-30" stroke="#00ff00" strokeWidth="4" />
                <path d="m578 1248 7 14h-14z" fill="#00ff00" />
                <path d="M578 1284h28" stroke="#ff0000" strokeWidth="4" />
                <path d="m615 1284-13-6v12z" fill="#ff0000" />
                <circle cx="578" cy="1284" r="7" fill="#0000c8" />
                <text x="618" y="1290" fill="#ff0000">X</text>
            </g>
        </svg>
    );
}

function ExtractPalette() {
    return (
        <div className="absolute top-0 left-px w-[154px] border-2 border-[#2a6099] bg-[#1d4873] text-white">
            <div className="flex h-[14px] items-center justify-end border-b border-[#12304f] bg-[#183657] pr-1">
                <X className="size-[10px] text-[#b9cde2]" strokeWidth={3} />
            </div>
            <div className="flex flex-col gap-2 px-2 pt-2 pb-[7px]">
                {["提取边线", "提取标注", "提取钢筋线"].map((label) => (
                    <button key={label} className="h-[31px] border border-[#163b61] bg-[#20507f]">
                        {label}
                    </button>
                ))}
                <div className="flex h-[31px] border border-[#163b61] bg-[#20507f]">
                    <button className="flex-1">点选识别</button>
                    <button aria-label="点选识别选项" className="grid w-5 place-items-center border-l border-[#163b61]">
                        <Caret className="text-white" />
                    </button>
                </div>
            </div>
        </div>
    );
}

function ViewTools() {
    return (
        <div className="absolute top-0 right-px flex w-10 flex-col items-center rounded-b border border-[#ccc] bg-white pt-[13px] pb-[10px]">
            <svg viewBox="0 0 28 282" className="h-[282px] w-7" fill="none" stroke={G} strokeWidth="1.500">
                <circle cx="14" cy="14" r="11" />
                <path d="M4 21C-4 20 16 0 24 4c6 6-14 22-20 17" stroke={B} />

                <path d="M2 43l6-6h18v18l-6 6H2zM2 43h18v18M20 43l6-6" />
                <path d="M6 49h3v3H7h2v4H6M12 49v7c5 0 5-7 0-7" stroke={B} />

                <path d="M2 79v18h18l6-6V73l-6 6z" />
                <path d="m2 79 6-6h18l-6 6z" fill={L} stroke={B} />
                <path d="M20 79v18" />
                <path d="M10 108h8l-4 6z" fill={G} stroke="none" />

                <path d="m2 128 6-6h18v18l-6 6H2zM2 128h18v18M20 128l6-6" fill={L} stroke={B} />
                <path d="M10 157h8l-4 6z" fill={G} stroke="none" />

                <path d="M2 178v-7h8M18 171h8v7M26 188v7h-8M10 195H2v-7" />

                <rect x="2" y="208" width="24" height="24" strokeDasharray="4 3" />
                <path d="m14 212 7 4v8l-7 4-7-4v-8zM7 216l7 4 7-4M14 220v8" stroke={B} />
                <path d="M0 241h28" strokeWidth="1" />

                <path d="M18 274H2v-24h24v13M7 257h6M16 257h5M7 262h8M7 267h5" />
                <ellipse cx="22" cy="271" rx="5" ry="4" stroke={B} fill="#fff" />
                <circle cx="22" cy="271" r="1.500" fill={B} stroke="none" />
            </svg>
        </div>
    );
}

function CanvasArea() {
    return (
        <main className="relative ml-1 min-w-0 flex-1 overflow-hidden bg-black">
            <Drawing />
            <ExtractPalette />
            <ViewTools />
            <button aria-label="收起左侧" className="absolute top-[519px] left-0">
                <svg viewBox="0 0 21 78" className="h-[78px] w-[21px]">
                    <path d="m0 0 18 5q3 1 3 4v60q0 3-3 4L0 78z" fill="#555" />
                    <path d="m12 35-5 4 5 4" fill="none" stroke="#bbb" />
                </svg>
            </button>
            <button aria-label="收起右侧" className="absolute top-[519px] right-0">
                <svg viewBox="0 0 21 78" className="h-[78px] w-[21px]">
                    <path d="M21 0 3 5Q0 6 0 9v60q0 3 3 4l18 5z" fill="#555" />
                    <path d="m9 35 5 4-5 4" fill="none" stroke="#bbb" />
                </svg>
            </button>
        </main>
    );
}

const floors = ["屋面2", "屋面1", "第5层", "第4层", "第3层", "第2层", "首层", "基础层"];

function DisplayPanel() {
    return (
        <aside className="relative ml-[6px] flex w-[358px] shrink-0 flex-col border-b border-l border-[#ccc]">
            <div className="flex h-[36px] shrink-0 items-center bg-[#ececee] pl-[6px]">
                <LockGrip />
                <h2 className="ml-3 flex-1">显示设置</h2>
                <X className="mr-[9px] size-4 text-[#999]" strokeWidth={1.5} />
            </div>
            <div className="flex h-[33px] shrink-0 items-end gap-1 border-b border-[#ccc] pl-[2px]">
                <button className="h-[27px] w-[77px] rounded-t bg-[#dcdcdc]">图元显示</button>
                <button className="-mb-px h-[29px] w-[75px] rounded-t border border-b-0 border-[#ccc] bg-white text-[#1a7af0]">楼层显示</button>
            </div>
            <div className="flex h-[37px] shrink-0 items-center border-b border-[#ccc] pl-2 text-black">
                {["当前楼层", "相邻楼层", "全部楼层"].map((label, index) => (
                    <label key={label} className="flex w-[117px] items-center gap-[9px] whitespace-nowrap">
                        <input
                            type="radio"
                            name="range"
                            defaultChecked={index === 0}
                            className="size-[17px] shrink-0 appearance-none rounded-full border border-[#888] checked:bg-[#1a73e8] checked:shadow-[inset_0_0_0_4px_white]"
                        />
                        {label}
                    </label>
                ))}
            </div>
            <div className="flex-1 border-b border-[#ccc] pt-[4px] text-[#777]">
                <label className="flex h-[29px] items-center pl-[13px]">
                    <Caret />
                    <input type="checkbox" disabled className="mr-[9px] ml-[10px] size-[17px] appearance-none rounded-sm border border-[#aaa] bg-[#eee] shadow-[inset_0_0_0_2px_#fff]" />
                    全部楼层
                </label>
                {floors.map((floor) => (
                    <label key={floor} className="flex h-[30px] items-center gap-[9px] pl-[55px]">
                        <span className="grid">
                            <input
                                type="checkbox"
                                disabled
                                defaultChecked={floor === "第4层"}
                                className="col-start-1 row-start-1 size-[17px] appearance-none rounded-sm border border-[#aaa] bg-[#eee]"
                            />
                            {floor === "第4层" && <Check className="col-start-1 row-start-1 m-[2px] size-[13px] text-[#888]" />}
                        </span>
                        {floor}
                    </label>
                ))}
            </div>
            <div className="flex h-[48px] shrink-0 items-center">
                <label className="flex items-center gap-1 pt-1">
                    <input type="checkbox" className="size-[17px] appearance-none rounded-sm border border-[#999]" />
                    其他区域图元亮显
                </label>
            </div>
            <div className="pointer-events-none absolute bottom-[28px] left-px text-[#b4b4b4]">
                <p className="text-[26px] leading-[34px]">激活 Windows</p>
                <p className="text-[18px] leading-[22px]">转到“设置”以激活 Windows。</p>
            </div>
        </aside>
    );
}

const snapTools = [
    { name: "正交", width: "w-[30px]", body: <path d="M4 2v16h14M4 12h6v6" /> },
    {
        name: "捕捉",
        width: "w-[44px]",
        active: true,
        caret: true,
        body: (
            <>
                <rect x="4" y="4" width="13" height="14" rx="2" />
                <circle cx="4" cy="4" r="2" stroke={B} fill="#fff" />
            </>
        ),
    },
    { name: "交点", width: "w-[30px]", body: <path d="M2 1c4 6 12 12 16 18M18 1C14 7 6 13 2 19" /> },
    { name: "角度", width: "w-[44px]", caret: true, body: <path d="M15 3 2 18h17M10 9l2 3" /> },
    {
        name: "偏移",
        width: "w-[44px]",
        caret: true,
        body: (
            <>
                <path d="M5 1v8M1 5h8M4 15h3" />
                <path d="M8 11h11v6H8z" fill={G} />
            </>
        ),
    },
    {
        name: "区域",
        width: "w-[30px]",
        body: (
            <>
                <path d="M2 2h13v13H2zM6 18h12V6" />
                <path d="M4 4h9v9H4z" fill={G} />
            </>
        ),
    },
    {
        name: "曲线",
        width: "w-[30px]",
        body: (
            <>
                <path d="M3 18C4 9 9 4 16 3M12 11v6" />
                <path d="m13 10 6 6-3 1-3 2z" fill={G} />
            </>
        ),
    },
];

function StatusBar() {
    return (
        <footer className="flex h-[38px] shrink-0 items-center bg-[#fbfbfb]">
            <span className="w-[108px] -indent-1">层高： 6</span>
            <span className="w-[175px]">标高： 18.42~24.42</span>
            <span className="w-[137px]">选中图元： 0</span>
            <span className="w-[138px]">隐藏图元： 0</span>
            <div className="flex gap-[6px]">
                {snapTools.map((tool) => (
                    <button
                        key={tool.name}
                        aria-label={tool.name}
                        className={`flex h-[31px] items-center justify-center gap-2 rounded-sm border ${tool.width} ${
                            tool.active ? "border-[#4a90e8] bg-[#dceafc]" : "border-[#aaa] bg-white"
                        }`}
                    >
                        <svg viewBox="0 0 20 20" fill="none" stroke={G} strokeWidth="1.300" className="size-5">
                            {tool.body}
                        </svg>
                        {tool.caret && <Caret className="text-[#555]" />}
                    </button>
                ))}
            </div>
            <svg viewBox="0 0 20 20" fill="none" stroke="#444" strokeWidth="1.500" className="mr-1 ml-[21px] size-5">
                <path d="M1 12v7h7M12 1h7v7M19 1l-7 7M1 19l7-7" />
            </svg>
            按鼠标左键指定插入点,按右键结束或 ESC 取消
            <div className="ml-auto flex items-center gap-[7px] pr-[12px]">
                <svg viewBox="0 0 18 18" className="size-[18px]">
                    <circle cx="9" cy="9" r="9" fill="#6abf0b" />
                    <path d="m5 9 3 3 5-6" fill="none" stroke="#fff" strokeWidth="1.500" />
                </svg>
                实时计算已完成
            </div>
        </footer>
    );
}

const wechat = (
    <>
        <ellipse cx="11" cy="10" rx="11" ry="9" fill="#2fd463" />
        <path d="m4 16-1 5 5-3z" fill="#2fd463" />
        <circle cx="7" cy="8" r="1.500" fill="#175c2f" />
        <circle cx="14" cy="8" r="1.500" fill="#175c2f" />
        <ellipse cx="19" cy="18" rx="9" ry="7.500" fill="#ececec" />
        <path d="m24 23 1 4-5-2z" fill="#ececec" />
        <circle cx="16" cy="16" r="1.200" fill="#666" />
        <circle cx="22" cy="16" r="1.200" fill="#666" />
    </>
);

const tasks = [
    {
        label: "跨板负筋怎么布置...",
        width: "w-[201px] pl-[10px]",
        icon: (
            <>
                <circle cx="14" cy="14" r="14" fill="#1268b8" />
                <path d="M0 13C1-4 27-4 28 11c0 7-9 8-12 6 4-6-3-11-9-8-4 1-6 2-7 4" fill="#36c6d8" />
                <path d="M17 1c7 1 11 5 11 10 0 7-9 8-12 6 4-3 3-10 1-16" fill="#5fdc6a" />
                <path d="M10 10c-4 8 4 17 15 13-9 10-25 3-25-9 2-5 6-6 10-4" fill="#0f4fa0" />
            </>
        ),
    },
    {
        label: "建模",
        width: "w-[198px] pl-[10px]",
        icon: (
            <>
                <path d="M6 2h9l2 3h6v20H6z" fill="#f0bf4c" />
                <path d="M6 2h5l3 5v21l-8-4z" fill="#fbe08c" />
            </>
        ),
    },
    {
        label: "",
        width: "w-[62px] pl-[14px]",
        icon: (
            <>
                <path d="m0 4 6 20h3l5-10 5 10h3l6-20h-5l-4 12-5-9-5 9L5 4z" fill="#ff4a26" />
                <path d="M10 4h8v3h-8z" fill="#ff7a3d" />
            </>
        ),
    },
    {
        label: "钉钉",
        width: "w-[201px] pl-[14px]",
        icon: (
            <>
                <rect width="26" height="28" rx="6" fill="#1489fa" />
                <path d="M7 4c5 3 11 4 13 8 0 4-3 6-5 7h2l-6 7 1-6h-3l1-3c-3-2-3-8-3-13" fill="#fff" />
            </>
        ),
    },
    {
        label: "广联达BIM土建计...",
        width: "w-[201px] bg-[#4c5e68] pl-[13px]",
        icon: (
            <>
                <rect width="28" height="28" rx="5" fill="#2b7cf5" />
                <path d="M28 12v16H16z" fill="#6a4df0" />
                <path d="m4 10 14-6 6 3v5l-6-1-1 14-6-2V12l-7 2z" fill="#fff" />
            </>
        ),
    },
    {
        label: "CAD快速看图 - E:\\...",
        width: "w-[201px] pl-[13px]",
        icon: (
            <>
                <rect x="1" y="1" width="26" height="26" rx="2" fill="#145fb5" stroke="#b5bcc5" strokeWidth="2" />
                <path d="M9 11H5v8h4M11 20l3-13 3 13M12 15h4M20 11v8c4 0 4-8 0-8" fill="none" stroke="#fff" strokeWidth="1.300" />
            </>
        ),
    },
    { label: "微信", width: "w-[200px] pl-[13px]", icon: wechat },
    { label: "微信 ", width: "w-[200px] pl-[13px]", icon: wechat },
];

function Taskbar() {
    return (
        <footer className="flex h-[45px] shrink-0 items-stretch bg-linear-to-r from-[#21383f] to-[#1c2743] text-white">
            <button aria-label="开始" className="grid w-[47px] place-items-center pt-[5px]">
                <svg viewBox="0 0 20 20" className="size-5" fill="#fff">
                    <path d="m0 3 8-1v8H0zM9 2l11-2v10H9zM0 11h8v8l-8-1zM9 11h11v9L9 18z" />
                </svg>
            </button>
            <button aria-label="任务视图" className="grid w-[74px] place-items-center pt-[5px]">
                <svg viewBox="0 0 20 20" className="size-5" fill="none" stroke="#fff" strokeWidth="1.300">
                    <path d="M1 1v3h12V1M1 7h12v7H1zM1 19v-3h12v3M18 1v5M18 10v9M17 7h2" />
                </svg>
            </button>
            {tasks.map((task) => (
                <button key={task.label} className={`flex shrink-0 items-center gap-1 pt-[5px] whitespace-nowrap ${task.width}`}>
                    <svg viewBox="0 0 28 28" className="size-7 shrink-0">
                        {task.icon}
                    </svg>
                    {task.label}
                </button>
            ))}
            <div className="ml-auto flex items-center pt-[5px]">
                <ChevronUp className="mx-[5px] size-5" strokeWidth={1.5} />
                <svg viewBox="0 0 20 20" className="mx-[5px] size-5" fill="none" stroke="#fff">
                    <path d="M6 6V1h8v5M4 6h12v6M4 6v13h7M13 16l2 3 4-6M8 3h1M11 3h1" />
                </svg>
                <svg viewBox="0 0 20 20" className="mx-[5px] size-5" fill="none" stroke="#fff">
                    <path d="M2 18C2 9 9 2 18 2M6 18c0-7 5-12 12-12M10 18c0-5 3-8 8-8M14 18c0-2 2-4 4-4" />
                    <circle cx="17.500" cy="17.500" r="1" fill="#fff" />
                </svg>
                <svg viewBox="0 0 20 20" className="mx-[5px] size-5">
                    <path d="M3 0c8 2 16 10 16 18-8 0-14-4-16-18" fill="#111" stroke="#888" />
                    <path d="M6 6c4 2 6 6 6 9" fill="none" stroke="#ddd" />
                    <path d="M4 19c0-5 6-5 6 0z" fill="#eee" />
                </svg>
                <Volume2 className="mx-[5px] size-5" strokeWidth={1.5} />
                <span className="w-[26px] text-center text-[20px]">英</span>
                <span className="w-11 text-center">
                    <span className="inline-block bg-white px-px leading-[19px] text-black">拼</span>
                </span>
                <time className="w-24 text-center leading-[22px]">
                    10:55
                    <br />
                    2025/7/3
                </time>
                <svg viewBox="0 0 20 20" className="mr-[29px] ml-[14px] size-5">
                    <path d="M0 0h20v16h-7l-3 4-3-4H0z" fill="#fff" />
                    <path d="M4 4h12M4 8h12M4 12h8" stroke="#1c2743" strokeWidth="1.300" />
                </svg>
            </div>
        </footer>
    );
}

export default function App() {
    return (
        <div className="flex h-screen flex-col overflow-hidden bg-white font-['Noto_Sans','Noto_Sans_CJK_SC',sans-serif] text-[15px] text-[#333]">
            <TitleBar />
            <MenuBar />
            <Ribbon />
            <OptionBar />
            <div className="flex min-h-0 flex-1">
                <NavPanel />
                <div className="ml-[5px] flex w-[350px] shrink-0 flex-col">
                    <MemberPanel />
                    <PropertyPanel />
                </div>
                <CanvasArea />
                <DisplayPanel />
            </div>
            <StatusBar />
            <Taskbar />
        </div>
    );
}
